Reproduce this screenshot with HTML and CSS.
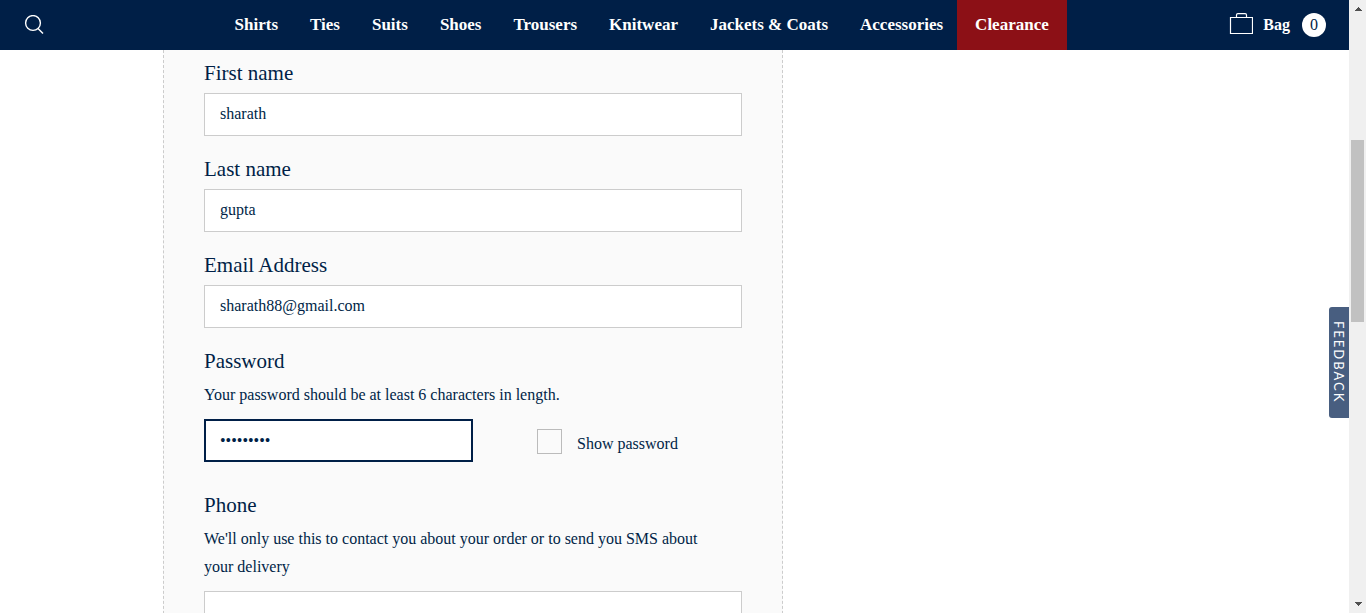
FILE: index.html
```html
<!DOCTYPE html>
<html lang="en">
<head>
<meta charset="utf-8">
<title>Create account</title>
<link rel="stylesheet" href="styles.css">
</head>
<body>
<div class="page">
  <header class="header">
    <button class="search" type="button" aria-label="Search">
      <svg width="20" height="20" viewBox="0 0 20 20" fill="none" stroke="#fff" stroke-width="1.4"><circle cx="9" cy="8" r="7.4"/><path d="M14 13.500l5 5"/></svg>
    </button>
    <nav class="nav">
      <a href="#">Shirts</a>
      <a href="#">Ties</a>
      <a href="#">Suits</a>
      <a href="#">Shoes</a>
      <a href="#">Trousers</a>
      <a href="#">Knitwear</a>
      <a href="#">Jackets &amp; Coats</a>
      <a href="#">Accessories</a>
      <a class="clearance" href="#">Clearance</a>
    </nav>
    <a class="bag" href="#">
      <svg width="24" height="24" viewBox="0 0 24 24" fill="none" stroke="#fff" stroke-width="1.2"><path d="M1.500 4.500h22v16h-22zM7.500 4.500V2q0-1.400 1.400-1.400h7.200q1.400 0 1.400 1.400v2.500"/></svg>
      <span class="bag-label">Bag</span>
      <span class="count">0</span>
    </a>
  </header>
  <main class="container">
    <form class="panel">
      <div class="field">
        <label for="first">First name</label>
        <input class="text" id="first" type="text" value="sharath">
      </div>
      <div class="field">
        <label for="last">Last name</label>
        <input class="text" id="last" type="text" value="gupta">
      </div>
      <div class="field">
        <label for="email">Email Address</label>
        <input class="text" id="email" type="email" value="sharath88@gmail.com">
      </div>
      <div class="field password">
        <label for="password">Password</label>
        <p class="hint">Your password should be at least 6 characters in length.</p>
        <div class="row">
          <input class="text active" id="password" type="password" value="sharath88">
          <div class="show">
            <input class="check" id="show" type="checkbox">
            <label class="show-label" for="show">Show password</label>
          </div>
        </div>
      </div>
      <div class="field">
        <label for="phone">Phone</label>
        <p class="hint">We'll only use this to contact you about your order or to send you SMS about your delivery</p>
        <input class="text" id="phone" type="tel">
      </div>
    </form>
  </main>
  <button class="feedback" type="button">FEEDBACK</button>
</div>
<div class="scrollbar" aria-hidden="true">
  <svg width="17" height="17" viewBox="0 0 17 17" shape-rendering="crispEdges"><path d="M5 11l4-4 4 4z" fill="#505050"/></svg>
  <div class="track"><div class="thumb"></div></div>
  <svg width="17" height="17" viewBox="0 0 17 17" shape-rendering="crispEdges"><path d="M5 6h8l-4 4z" fill="#505050"/></svg>
</div>
</body>
</html>
```
FILE: styles.css
```css
* {
  box-sizing: border-box;
}

body {
  margin: 0;
  height: 100vh;
  overflow: hidden;
  display: grid;
  grid-template-columns: 1fr 17px;
  background: #fff;
  color: #001f47;
  font: 16px/28px "Liberation Serif", serif;
}

.page {
  position: relative;
  min-width: 0;
  height: 100vh;
  overflow: hidden;
}

.header {
  display: flex;
  align-items: center;
  justify-content: space-between;
  height: 50px;
  padding: 0 23px 0 24px;
  background: #001f47;
}

.header a {
  color: #fff;
  text-decoration: none;
}

.search {
  display: flex;
  padding: 0;
  border: 0;
  background: none;
}

.nav {
  display: flex;
  gap: 32px;
  margin-left: 28px;
  font-size: 17px;
  font-weight: bold;
  line-height: 50px;
  white-space: nowrap;
}

.nav .clearance {
  margin-left: -18px;
  padding: 0 18px;
  background: #8c1016;
}

.bag {
  display: flex;
  align-items: center;
  gap: 10px;
  font-weight: bold;
}

.count {
  width: 24px;
  height: 24px;
  margin-left: 2px;
  border-radius: 50%;
  background: #fff;
  color: #001f47;
  font-weight: normal;
  line-height: 24px;
  text-align: center;
}

.container {
  max-width: 1023px;
  margin: 0 auto;
}

.panel {
  max-width: 620px;
  padding: 10px 40px;
  border: dashed #ccc;
  border-width: 0 1px;
  background: #fafafa;
}

.field {
  margin-bottom: 20px;
}

.field label {
  display: block;
  margin-bottom: 7px;
  font-size: 21px;
  line-height: 26px;
}

.hint {
  margin: 0 0 10px;
  padding-right: 24px;
}

.text {
  display: block;
  width: 100%;
  height: 43px;
  padding: 0 15px 2px;
  border: 1px solid #ccc;
  border-radius: 0;
  outline: 0;
  background: #fff;
  color: #001f47;
  font: inherit;
}

.password {
  margin-bottom: 30px;
}

.row {
  display: grid;
  grid-template-columns: 1fr 1fr;
}

.text.active {
  padding: 0 14px;
  border: 2px solid #001f47;
}

.show {
  display: flex;
  align-items: center;
  gap: 15px;
  padding-left: 64px;
}

.check {
  appearance: none;
  width: 25px;
  height: 25px;
  margin: 2px 0 0;
  border: 1px solid #bbb;
}

.field .show-label {
  margin: 6px 0 0;
  font-size: 16px;
}

.feedback {
  position: absolute;
  top: 50%;
  right: 0;
  width: 20px;
  height: 111px;
  padding: 0;
  border: 0;
  border-radius: 3px 0 0 3px;
  background: #485e80;
  color: #fff;
  font: 13px/20px Lato, sans-serif;
  letter-spacing: 2px;
  writing-mode: vertical-rl;
}

.scrollbar {
  display: flex;
  flex-direction: column;
  height: 100vh;
  background: #f0f0f0;
}

.track {
  flex: 1;
  padding: 0 2px;
}

.thumb {
  height: 182px;
  margin-top: 123px;
  background: #c1c1c1;
}
```
